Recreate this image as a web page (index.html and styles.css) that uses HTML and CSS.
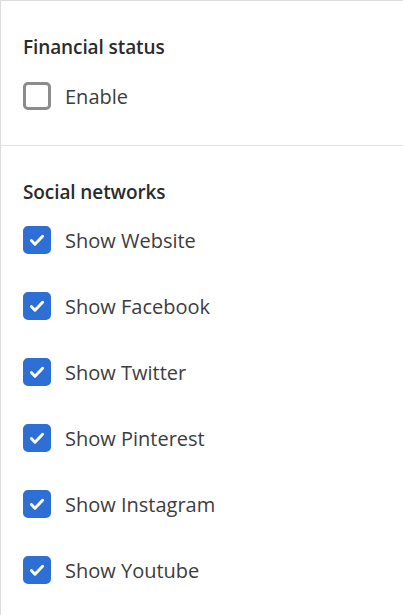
FILE: index.html
```html
<!DOCTYPE html>
<html lang="en">
<head>
    <meta charset="utf-8">
    <title>Settings</title>
    <meta name="viewport" content="width=device-width, initial-scale=1">
    <link rel="stylesheet" href="styles.css">
</head>
<body>
    <div class="panel">
        <div class="section">
            <h2>Financial status</h2>
            <label class="check">
                <input type="checkbox">
                <span class="box"></span>
                <span class="text">Enable</span>
            </label>
        </div>

        <div class="section">
            <h2>Social networks</h2>
            <div class="check-list">
                <label class="check">
                    <input type="checkbox" checked>
                    <span class="box"></span>
                    <span class="text">Show Website</span>
                </label>
                <label class="check">
                    <input type="checkbox" checked>
                    <span class="box"></span>
                    <span class="text">Show Facebook</span>
                </label>
                <label class="check">
                    <input type="checkbox" checked>
                    <span class="box"></span>
                    <span class="text">Show Twitter</span>
                </label>
                <label class="check">
                    <input type="checkbox" checked>
                    <span class="box"></span>
                    <span class="text">Show Pinterest</span>
                </label>
                <label class="check">
                    <input type="checkbox" checked>
                    <span class="box"></span>
                    <span class="text">Show Instagram</span>
                </label>
                <label class="check">
                    <input type="checkbox" checked>
                    <span class="box"></span>
                    <span class="text">Show Youtube</span>
                </label>
            </div>
        </div>
    </div>
</body>
</html>
```

FILE: styles.css
```css
body {
    margin: 0;
    font-family: 'Open Sans', 'Noto Sans', sans-serif;
    color: #333;
    background-color: #fff;
}

.panel {
    height: 615px;
    box-sizing: border-box;
    border-top: 1px solid #dcdcdc;
    border-left: 1px solid #dcdcdc;
}

.section {
    padding: 34px 22px 35px;
    display: flex;
    flex-direction: column;
    gap: 23px;
}

.section + .section {
    border-top: 1px solid #e2e2e2;
    gap: 22px;
}

h2 {
    margin: 0;
    font-size: 19px;
    line-height: 24px;
    font-weight: 600;
    color: #2b2b2b;
    letter-spacing: -0.1px;
}

.check-list {
    display: flex;
    flex-direction: column;
    gap: 38px;
}

.check {
    display: flex;
    align-items: center;
    gap: 14px;
    height: 28px;
    cursor: pointer;
}

.check input {
    display: none;
}

.box {
    width: 28px;
    height: 28px;
    box-sizing: border-box;
    border: 3px solid #8c8c8c;
    border-radius: 5px;
    background: #fff center / 18px 18px no-repeat;
}

.check input:checked + .box {
    border-color: #2e6fd6;
    background-color: #2e6fd6;
    background-image: url("data:image/svg+xml,%3Csvg xmlns='http://www.w3.org/2000/svg' viewBox='0 0 16 16'%3E%3Cpath d='M3 8.5l3.2 3.2 6.8-7' fill='none' stroke='%23fff' stroke-width='2.6' stroke-linecap='round' stroke-linejoin='round'/%3E%3C/svg%3E");
}

.text {
    font-size: 20px;
    color: #3d3d3d;
}
```
